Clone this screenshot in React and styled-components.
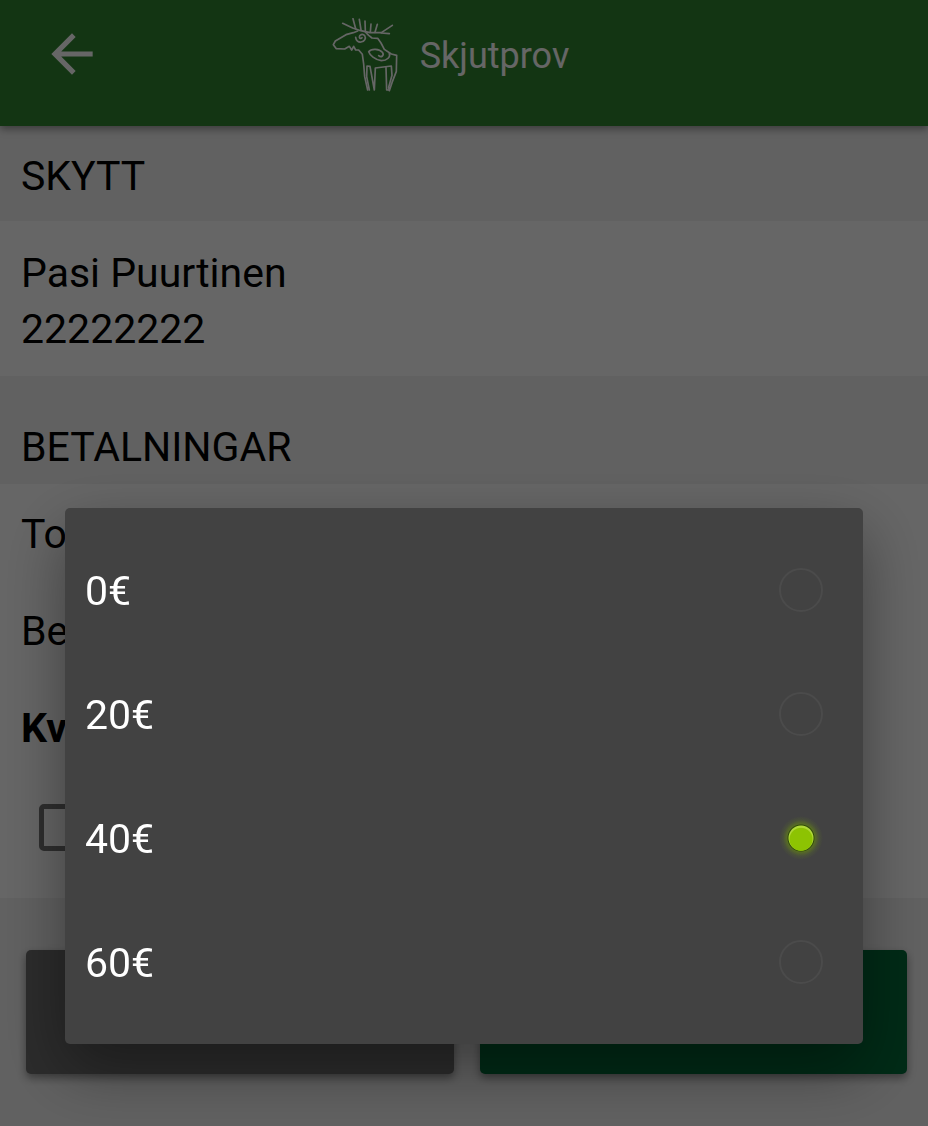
import React, {useState} from 'react';
import styled, {createGlobalStyle, css} from 'styled-components';

const GlobalStyle = createGlobalStyle`
  * {
    box-sizing: border-box;
  }

  body {
    margin: 0;
    background: #f2f2f2;
    color: #000;
    font-family: Roboto, 'Liberation Sans', sans-serif;
    font-size: 41px;
    line-height: 56px;
  }
`;

const TopBar = styled.header`
  display: flex;
  align-items: center;
  position: relative;
  height: 126px;
  padding: 0 130px 16px 41px;
  background: #308630;
  box-shadow: 0 3px 8px rgba(0, 0, 0, 0.4);
  color: #fff;
`;

const BackButton = styled.button`
  display: flex;
  padding: 0 0 2px;
  border: 0;
  background: none;
  color: inherit;
  cursor: pointer;
`;

const Brand = styled.div`
  display: flex;
  flex: 1;
  align-items: center;
  justify-content: center;
  gap: 20px;
`;

const Title = styled.h1`
  margin: 0;
  padding-top: 2px;
  font-size: 36px;
  font-weight: 400;
`;

const SectionTitle = styled.h2`
  margin: 0;
  padding: ${(props) => (props.$first ? '22px 21px 17px' : '43px 21px 9px')};
  font-size: 41px;
  font-weight: 400;
`;

const Shooter = styled.section`
  padding: 24px 21px 19px;
  background: #fff;
`;

const Line = styled.p`
  margin: 0;
`;

const Payments = styled.section`
  padding: 1px 21px 20px;
  background: #fff;
`;

const PaymentRow = styled.div`
  display: flex;
  align-items: center;
  height: 97px;
  font-weight: ${(props) => (props.$bold ? 700 : 400)};
`;

const CheckRow = styled.div`
  display: flex;
  align-items: center;
  height: 102px;
  padding-left: 18px;
`;

const Checkbox = styled.input`
  appearance: none;
  width: 47px;
  height: 47px;
  margin: 0;
  border: 5px solid #757575;
  border-radius: 5px;
`;

const Actions = styled.footer`
  display: flex;
  gap: 26px;
  padding: 52px 21px 52px 26px;
`;

const ActionButton = styled.button`
  flex: 1;
  height: 124px;
  border: 0;
  border-radius: 5px;
  background: ${(props) => (props.$primary ? '#006b38' : '#6e6e6e')};
  box-shadow: 0 4px 8px rgba(0, 0, 0, 0.4);
`;

const Scrim = styled.div`
  display: flex;
  align-items: flex-end;
  position: fixed;
  inset: 0;
  padding: 0 65px 82px;
  background: rgba(0, 0, 0, 0.6);
`;

const Dialog = styled.div`
  flex: 1;
  padding: 20px 0;
  border-radius: 5px;
  background: #424242;
  box-shadow: 0 24px 64px rgba(0, 0, 0, 0.4);
  color: #fff;
`;

const Option = styled.label`
  display: flex;
  align-items: center;
  justify-content: space-between;
  height: 124px;
  padding: 0 40px 0 20px;
`;

const Amount = styled.span`
  padding-top: 2px;
`;

const glow = css`
  border-color: transparent;
  background:
    radial-gradient(circle at 50% 53%, #8dc302 0 11px, transparent 12px),
    radial-gradient(
      circle,
      #b0d838 0 12px,
      #2f4a08 13px,
      rgba(110, 150, 10, 0.5) 14px,
      rgba(100, 130, 30, 0.2) 18px,
      transparent 22px
    );
  background-origin: border-box;
`;

const Radio = styled.input`
  appearance: none;
  width: 44px;
  height: 44px;
  margin: 0;
  border: 2px solid #4b4b4b;
  border-radius: 50%;

  &:checked {
    ${glow}
  }
`;

const ArrowBack = () => (
  <svg width="62" height="62" viewBox="0 0 24 24" fill="currentColor" aria-hidden="true">
    <path d="M20 11H7.83l5.59-5.59L12 4l-8 8 8 8 1.41-1.41L7.83 13H20v-2z" />
  </svg>
);

const Moose = () => (
  <svg
    width="68"
    height="74"
    viewBox="36 38 204 222"
    fill="none"
    stroke="currentColor"
    strokeWidth="5"
    strokeLinecap="round"
    strokeLinejoin="round"
    aria-hidden="true"
  >
    {/* antlers */}
    <path d="M68 54L98 68L122 76L150 82L184 82L217 60" />
    <path d="M99 40L107 70M118 42L123 74M135 47L136 76M153 56L151 80M172 57L165 81M184 83L208 85" />
    {/* head and chest */}
    <path d="M113 77L100 82L78 88L46 107L40 118L49 130L74 131L88 123L95 134L101 123L107 134L116 134L127 147L131 176L134 214L143 254" />
    <path d="M107 96C108 106 115 111 123 110C134 109 139 99 134 91C128 84 118 88 118 95C119 100 124 101 126 97" />
    {/* back and hind leg */}
    <path d="M136 80L146 90L156 98L173 99L183 113L193 132L214 146L230 150L229 198L216 232L208 256L206 246L216 210L214 182L166 188L163 254L150 183L141 182L140 214L148 254" />
    <path d="M198 187L200 254L207 254" />
    {/* shoulder */}
    <path d="M176 151C184 158 194 150 187 141C178 130 154 129 146 139C150 150 164 163 184 166C202 166 212 154 208 144" />
  </svg>
);

const amounts = ['0€', '20€', '40€', '60€'];

const App = () => {
  const [amount, setAmount] = useState('40€');

  return (
    <>
      <GlobalStyle />
      <TopBar>
        <BackButton aria-label="Tillbaka">
          <ArrowBack />
        </BackButton>
        <Brand>
          <Moose />
          <Title>Skjutprov</Title>
        </Brand>
      </TopBar>
      <main>
        <SectionTitle $first>SKYTT</SectionTitle>
        <Shooter>
          <Line>Pasi Puurtinen</Line>
          <Line>22222222</Line>
        </Shooter>
        <SectionTitle>BETALNINGAR</SectionTitle>
        <Payments>
          <PaymentRow>To</PaymentRow>
          <PaymentRow>Be</PaymentRow>
          <PaymentRow $bold>Kv</PaymentRow>
          <CheckRow>
            <Checkbox type="checkbox" aria-label="Klar" />
          </CheckRow>
        </Payments>
      </main>
      <Actions>
        <ActionButton aria-label="Avbryt" />
        <ActionButton $primary aria-label="Spara" />
      </Actions>
      <Scrim>
        <Dialog role="dialog" aria-modal="true" aria-label="Betalt">
          {amounts.map((value) => (
            <Option key={value}>
              <Amount>{value}</Amount>
              <Radio
                type="radio"
                name="amount"
                value={value}
                checked={amount === value}
                onChange={() => setAmount(value)}
              />
            </Option>
          ))}
        </Dialog>
      </Scrim>
    </>
  );
};

export default App;
